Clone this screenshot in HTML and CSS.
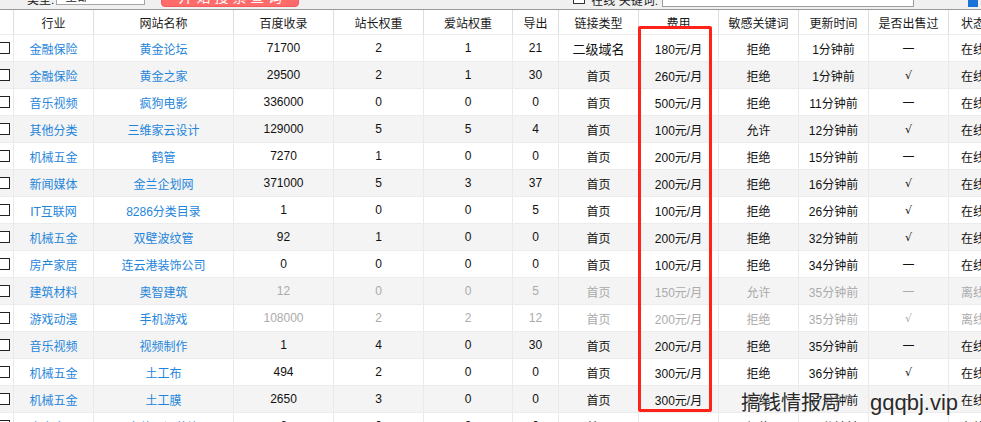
FILE: index.html
```html
<!DOCTYPE html>
<html lang="zh-CN">
<head>
<meta charset="utf-8">
<title>链接列表</title>
<link rel="stylesheet" href="styles.css">
</head>
<body>
<div class="page">
  <div class="toolbar">
    <span class="tb-label">类型:</span>
    <span class="tb-select">全部</span>
    <span class="tb-button">开 始 搜 索 查 询</span>
    <span class="tb-check"></span>
    <span class="tb-label2">在线 关键词:</span>
    <span class="tb-input"></span>
    <span class="tb-blue"></span>
  </div>
  <table class="grid">
    <colgroup>
      <col class="c-cb"><col class="c-hy"><col class="c-name"><col class="c-bd"><col class="c-zz"><col class="c-az"><col class="c-dc"><col class="c-lj"><col class="c-fy"><col class="c-mg"><col class="c-gx"><col class="c-cs"><col class="c-zt">
    </colgroup>
    <thead>
      <tr><th></th><th>行业</th><th>网站名称</th><th>百度收录</th><th>站长权重</th><th>爱站权重</th><th>导出</th><th>链接类型</th><th>费用</th><th>敏感关键词</th><th>更新时间</th><th>是否出售过</th><th class="left">状态</th></tr>
    </thead>
    <tbody>
      <tr><td><span class="cb"></span></td><td class="lk">金融保险</td><td class="lk">黄金论坛</td><td>71700</td><td>2</td><td>1</td><td>21</td><td class="zh">二级域名</td><td>180元/月</td><td>拒绝</td><td>1分钟前</td><td>一</td><td class="left">在线</td></tr>
      <tr><td><span class="cb"></span></td><td class="lk">金融保险</td><td class="lk">黄金之家</td><td>29500</td><td>2</td><td>1</td><td>30</td><td>首页</td><td>260元/月</td><td>拒绝</td><td>1分钟前</td><td class="ck">√</td><td class="left">在线</td></tr>
      <tr><td><span class="cb"></span></td><td class="lk">音乐视频</td><td class="lk">疯狗电影</td><td>336000</td><td>0</td><td>0</td><td>0</td><td>首页</td><td>500元/月</td><td>拒绝</td><td>11分钟前</td><td>一</td><td class="left">在线</td></tr>
      <tr><td><span class="cb"></span></td><td class="lk">其他分类</td><td class="lk">三维家云设计</td><td>129000</td><td>5</td><td>5</td><td>4</td><td>首页</td><td>100元/月</td><td>允许</td><td>12分钟前</td><td class="ck">√</td><td class="left">在线</td></tr>
      <tr><td><span class="cb"></span></td><td class="lk">机械五金</td><td class="lk">鹤管</td><td>7270</td><td>1</td><td>0</td><td>0</td><td>首页</td><td>200元/月</td><td>拒绝</td><td>15分钟前</td><td>一</td><td class="left">在线</td></tr>
      <tr><td><span class="cb"></span></td><td class="lk">新闻媒体</td><td class="lk">金兰企划网</td><td>371000</td><td>5</td><td>3</td><td>37</td><td>首页</td><td>200元/月</td><td>拒绝</td><td>16分钟前</td><td class="ck">√</td><td class="left">在线</td></tr>
      <tr><td><span class="cb"></span></td><td class="lk">IT互联网</td><td class="lk">8286分类目录</td><td>1</td><td>0</td><td>0</td><td>5</td><td>首页</td><td>100元/月</td><td>拒绝</td><td>26分钟前</td><td class="ck">√</td><td class="left">在线</td></tr>
      <tr><td><span class="cb"></span></td><td class="lk">机械五金</td><td class="lk">双壁波纹管</td><td>92</td><td>1</td><td>0</td><td>0</td><td>首页</td><td>200元/月</td><td>拒绝</td><td>32分钟前</td><td class="ck">√</td><td class="left">在线</td></tr>
      <tr><td><span class="cb"></span></td><td class="lk">房产家居</td><td class="lk">连云港装饰公司</td><td>0</td><td>0</td><td>0</td><td>0</td><td>首页</td><td>100元/月</td><td>拒绝</td><td>34分钟前</td><td>一</td><td class="left">在线</td></tr>
      <tr class="off"><td><span class="cb"></span></td><td class="lk">建筑材料</td><td class="lk">奥智建筑</td><td>12</td><td>0</td><td>0</td><td>5</td><td>首页</td><td>150元/月</td><td>允许</td><td>35分钟前</td><td>一</td><td class="left">离线</td></tr>
      <tr class="off"><td><span class="cb"></span></td><td class="lk">游戏动漫</td><td class="lk">手机游戏</td><td>108000</td><td>2</td><td>2</td><td>12</td><td>首页</td><td>200元/月</td><td>拒绝</td><td>35分钟前</td><td class="ck">√</td><td class="left">离线</td></tr>
      <tr><td><span class="cb"></span></td><td class="lk">音乐视频</td><td class="lk">视频制作</td><td>1</td><td>4</td><td>0</td><td>30</td><td>首页</td><td>200元/月</td><td>拒绝</td><td>35分钟前</td><td>一</td><td class="left">在线</td></tr>
      <tr><td><span class="cb"></span></td><td class="lk">机械五金</td><td class="lk">土工布</td><td>494</td><td>2</td><td>0</td><td>0</td><td>首页</td><td>300元/月</td><td>拒绝</td><td>36分钟前</td><td class="ck">√</td><td class="left">在线</td></tr>
      <tr><td><span class="cb"></span></td><td class="lk">机械五金</td><td class="lk">土工膜</td><td>2650</td><td>3</td><td>0</td><td>0</td><td>首页</td><td>300元/月</td><td>拒绝</td><td>37分钟前</td><td>一</td><td class="left">在线</td></tr>
      <tr><td><span class="cb"></span></td><td class="lk">房产家居</td><td class="lk">大井驱温装饰</td><td>6</td><td>0</td><td>0</td><td>0</td><td>首页</td><td>100元/月</td><td>拒绝</td><td>38分钟前</td><td>一</td><td class="left">在线</td></tr>
    </tbody>
  </table>
  <div class="highlight"></div>
  <div class="watermark"><span class="wm-cn">搞钱情报局</span><span class="wm-tm">™</span><span class="wm-en">gqqbj.vip</span></div>
</div>
</body>
</html>
```
FILE: styles.css
```css
html, body {
  margin: 0;
  padding: 0;
  background: #fff;
}
body {
  width: 981px;
  height: 422px;
  overflow: hidden;
  font-family: "Liberation Sans", "Noto Sans CJK SC", sans-serif;
  font-size: 12px;
  color: #111;
}
.page {
  position: relative;
  width: 981px;
  height: 422px;
  overflow: hidden;
}
.toolbar {
  height: 9px;
  background: #f0f0f0;
  border-bottom: 1px solid #9a9a9a;
  display: flex;
  align-items: flex-end;
  overflow: hidden;
  white-space: nowrap;
}
.tb-label {
  margin-left: 27px;
  margin-bottom: 2px;
  line-height: 14px;
  color: #222;
  font-size: 12px;
}
.tb-select {
  margin-left: 0;
  width: 89px;
  height: 22px;
  margin-bottom: 4px;
  box-sizing: border-box;
  background: #fff;
  border: 1px solid #a6a6a6;
  margin-left: 2px;
  padding-left: 8px;
  line-height: 26px;
  color: #222;
}
.tb-button {
  margin-left: 16px;
  width: 138px;
  height: 24px;
  margin-bottom: 2px;
  background: #ff6b6b;
  border: 1px solid #f35a5a;
  box-sizing: border-box;
  border-radius: 0 0 4px 4px;
  color: #fff;
  text-align: center;
  line-height: 26px;
  font-size: 14px;
}
.tb-check {
  margin-left: 274px;
  width: 12px;
  height: 12px;
  margin-bottom: 5px;
  box-sizing: border-box;
  border: 1px solid #333;
  background: #fff;
}
.tb-label2 {
  margin-left: 6px;
  margin-bottom: 1px;
  line-height: 14px;
  color: #222;
}
.tb-input {
  margin-left: 4px;
  width: 252px;
  height: 24px;
  margin-bottom: 2px;
  box-sizing: border-box;
  background: #fff;
  border: 1px solid #9c9c9c;
}
.tb-blue {
  margin-left: 54px;
  width: 10px;
  height: 20px;
  margin-bottom: 2px;
  background: #1a73d8;
}
.grid {
  table-layout: fixed;
  border-collapse: separate;
  border-spacing: 0;
  width: 1000px;
}
.c-cb { width: 14px; }
.c-hy { width: 80px; }
.c-name { width: 140px; }
.c-bd { width: 100px; }
.c-zz { width: 90px; }
.c-az { width: 89px; }
.c-dc { width: 46px; }
.c-lj { width: 80px; }
.c-fy { width: 80px; }
.c-mg { width: 80px; }
.c-gx { width: 70px; }
.c-cs { width: 80px; }
.c-zt { width: 51px; }
.grid th {
  height: 25px;
  padding: 0;
  font-weight: normal;
  color: #1a1a1a;
  text-align: center;
  border-right: 1px solid #dedede;
  border-bottom: 1px solid #ececec;
  box-sizing: border-box;
  background: #fff;
  white-space: nowrap;
  overflow: hidden;
}
.grid td {
  height: 27px;
  padding: 0;
  text-align: center;
  border-right: 1px solid #eaeaea;
  border-bottom: 1px solid #ececec;
  box-sizing: border-box;
  white-space: nowrap;
  overflow: hidden;
  color: #111;
}
.grid tbody tr:nth-child(even) td {
  background: #f4f4f4;
}
.grid .left {
  text-align: left;
  padding-left: 12px;
}
.grid td.lk {
  color: #1f86dc;
}
.grid tr.off td {
  color: #ababab;
}
.grid tr.off td.lk {
  color: #1f86dc;
}
.grid td.ck {
  font-family: "DejaVu Sans", sans-serif;
  font-size: 11px;
}
.grid td.zh {
  font-size: 13px;
}
.cb {
  display: block;
  width: 12px;
  height: 12px;
  margin-left: -2px;
  box-sizing: border-box;
  border: 1px solid #222;
  background: #fff;
}
.highlight {
  position: absolute;
  left: 638px;
  top: 26px;
  width: 74px;
  height: 386px;
  box-sizing: border-box;
  border: 3px solid #ff2219;
  border-radius: 2px;
}
.watermark {
  position: absolute;
  left: 741px;
  top: 388px;
  display: flex;
  align-items: baseline;
  color: #2a2a2a;
  text-shadow: 0 0 2px #fff, 0 0 1px #fff;
  white-space: nowrap;
}
.wm-cn {
  font-family: "Noto Sans CJK SC", sans-serif;
  font-size: 20px;
  line-height: 28px;
}
.wm-tm {
  font-size: 9px;
  margin-left: 3px;
  align-self: flex-start;
  margin-top: 6px;
}
.wm-en {
  font-family: "Liberation Sans", sans-serif;
  font-size: 22px;
  margin-left: 17px;
  line-height: 28px;
}
```
